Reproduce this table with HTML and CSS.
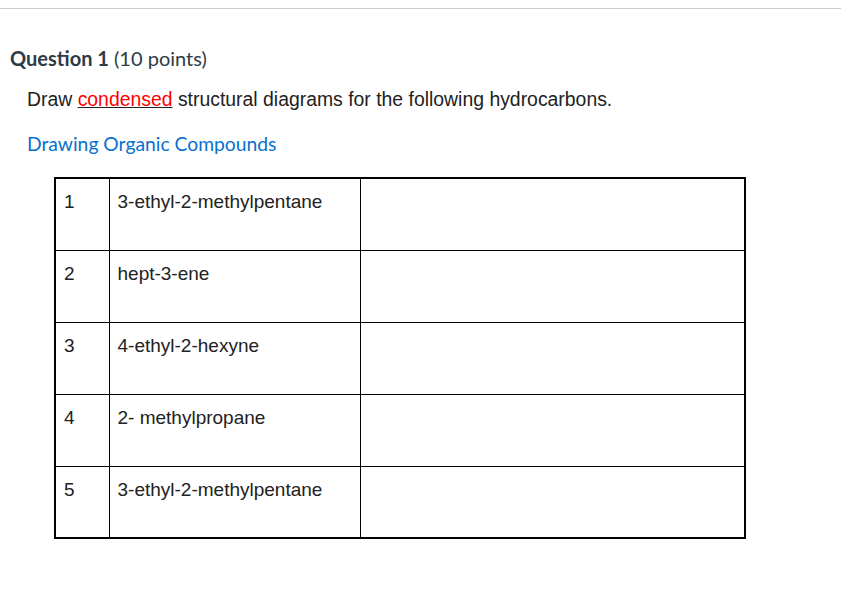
FILE: index.html
```html
<!DOCTYPE html>
<html>
<head>
<meta charset="utf-8">
<link rel="stylesheet" href="styles.css">
</head>
<body>
<div class="page">
  <div class="topline"></div>
  <div class="question">
    <h2 class="qtitle"><span class="qnum">Question 1</span> <span class="qpts">(10 points)</span></h2>
    <div class="qbody">
      <p class="prompt">Draw <span class="red">condensed</span> structural diagrams for the following hydrocarbons.</p>
      <p class="linkline"><a class="link" href="#">Drawing Organic Compounds</a></p>
      <table class="grid">
        <tr><td class="c1">1</td><td class="c2">3-ethyl-2-methylpentane</td><td class="c3"></td></tr>
        <tr><td class="c1">2</td><td class="c2">hept-3-ene</td><td class="c3"></td></tr>
        <tr><td class="c1">3</td><td class="c2">4-ethyl-2-hexyne</td><td class="c3"></td></tr>
        <tr><td class="c1">4</td><td class="c2">2- methylpropane</td><td class="c3"></td></tr>
        <tr><td class="c1">5</td><td class="c2">3-ethyl-2-methylpentane</td><td class="c3"></td></tr>
      </table>
    </div>
  </div>
</div>
</body>
</html>
```
FILE: styles.css
```css
html, body {
  margin: 0;
  padding: 0;
  background: #ffffff;
}
.page {
  padding-top: 8px;
}
.topline {
  height: 1px;
  background: #c7cdd1;
}
.question {
  padding: 0 10px;
}
.qtitle {
  margin: 36px 0 0 0;
  font-family: Lato, sans-serif;
  font-size: 20px;
  line-height: 26px;
  color: #2d3b45;
  font-weight: normal;
}
.qnum {
  font-weight: bold;
}
.qbody {
  padding-left: 17px;
}
.prompt {
  margin: 16px 0 0 0;
  font-family: "Liberation Sans", Arial, sans-serif;
  font-size: 19.4px;
  line-height: 24px;
  color: #222;
}
.red {
  color: #ff0000;
  text-decoration: underline;
  text-decoration-color: #222;
}
.linkline {
  margin: 20px 0 0 0;
  font-family: Lato, sans-serif;
  font-size: 19.3px;
  line-height: 26px;
}
.link {
  color: #0770cf;
  text-decoration: none;
}
.grid {
  margin-top: 20px;
  margin-left: 27px;
  border-collapse: collapse;
  border: 2px solid #000;
  font-family: "Liberation Sans", Arial, sans-serif;
  font-size: 19px;
  color: #222;
}
.grid td {
  border: 1px solid #000;
  height: 72px;
  box-sizing: border-box;
  vertical-align: top;
  padding: 12px 8px 0 8px;
  line-height: 22px;
}
.c1 { width: 54px; }
.c2 { width: 251px; }
.c3 { width: 385px; }
```
